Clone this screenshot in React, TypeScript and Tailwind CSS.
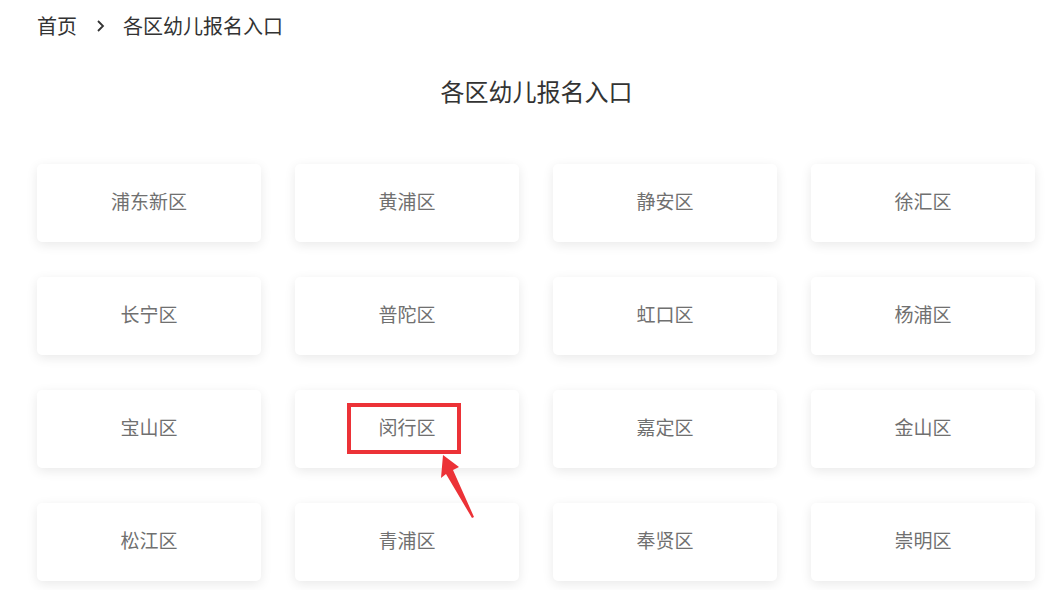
import React from "react";

const districts = [
  "浦东新区", "黄浦区", "静安区", "徐汇区",
  "长宁区", "普陀区", "虹口区", "杨浦区",
  "宝山区", "闵行区", "嘉定区", "金山区",
  "松江区", "青浦区", "奉贤区", "崇明区",
];

export default function App() {
  return (
    <div
      className="relative w-[1058px] h-[590px] overflow-hidden bg-white"
      style={{ fontFamily: '"Noto Sans CJK SC", "Noto Sans", sans-serif' }}
    >
      <div className="flex items-center h-[52px] pl-[37px] text-[20px] text-[#333] leading-none">
        <span>首页</span>
        <svg className="ml-[19px] mr-[17px]" width="10" height="14" viewBox="0 0 10 14">
          <path d="M2 2 L7 7 L2 12" fill="none" stroke="#333" strokeWidth="1.8" />
        </svg>
        <span>各区幼儿报名入口</span>
      </div>
      <div className="flex justify-center pl-[15px] mt-[27px] text-[24px] text-[#333] leading-none">
        各区幼儿报名入口
      </div>
      <div className="grid grid-cols-4 gap-x-[34px] gap-y-[35px] pl-[37px] pr-[23px] mt-[61px]">
        {districts.map((d) => (
          <div
            key={d}
            className="relative h-[78px] pb-[3px] flex items-center justify-center rounded-[5px] bg-white shadow-[0_3px_12px_rgba(0,0,0,0.09)] text-[19px] text-[#707070]"
          >
            {d}
            {d === "闵行区" && (
              <div className="absolute left-[52px] top-[13px] w-[114px] h-[51px] border-[4px] border-[#ec3237]" />
            )}
          </div>
        ))}
      </div>
      <svg
        className="absolute left-0 top-0 pointer-events-none"
        width="1058"
        height="590"
        viewBox="0 0 1058 590"
      >
        <path d="M443 455 L459 467 L453 470 L474 517 L472 518 L446 474 L441 478 Z" fill="#ec3237" />
      </svg>
    </div>
  );
}
